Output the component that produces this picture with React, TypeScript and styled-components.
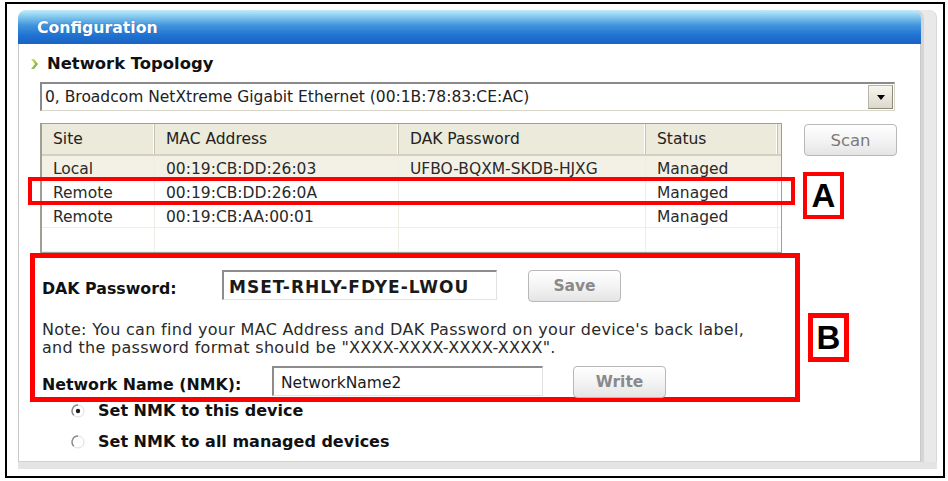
import styled, { createGlobalStyle } from 'styled-components';

const GlobalStyle = createGlobalStyle`
  body {
    margin: 0;
    background: #ffffff;
    font-family: "DejaVu Sans", Verdana, sans-serif;
    font-size: 15.5px;
    color: #222222;
  }
`;

const columns = [
  { key: 'site', title: 'Site', width: 113 },
  { key: 'mac', title: 'MAC Address', width: 244 },
  { key: 'dak', title: 'DAK Password', width: 247 },
  { key: 'status', title: 'Status', width: 132 },
];

const devices = [
  { site: 'Local', mac: '00:19:CB:DD:26:03', dak: 'UFBO-BQXM-SKDB-HJXG', status: 'Managed' },
  { site: 'Remote', mac: '00:19:CB:DD:26:0A', dak: '', status: 'Managed' },
  { site: 'Remote', mac: '00:19:CB:AA:00:01', dak: '', status: 'Managed' },
  { site: '', mac: '', dak: '', status: '' },
];

function TopologyIcon() {
  return (
    <svg width="8" height="12" viewBox="0 0 8 12">
      <defs>
        <linearGradient id="arrowFill" x1="0" y1="0" x2="1" y2="1">
          <stop offset="0" stopColor="#d6e85a" />
          <stop offset="1" stopColor="#5fa02a" />
        </linearGradient>
      </defs>
      <polygon points="0,1 3,1 7,6 3,11 0,11 4,6" fill="url(#arrowFill)" />
    </svg>
  );
}

function RadioMark({ checked }: { checked: boolean }) {
  return (
    <svg width="14" height="14" viewBox="0 0 14 14">
      <circle cx="7" cy="7" r="6" fill="#ffffff" stroke="#dcdcdc" strokeWidth="1" />
      <path d="M7 1 A6 6 0 0 0 2.8 11.2" fill="none" stroke="#8a8a8a" strokeWidth="1.4" />
      {checked && <circle cx="7" cy="7" r="2.2" fill="#1a1a1a" />}
    </svg>
  );
}

export default function App() {
  return (
    <>
      <GlobalStyle />
      <Frame>
        <Window>
          <TitleBar>Configuration</TitleBar>
          <Panel>
            <Heading>
              <TopologyIcon />
              <span>Network Topology</span>
            </Heading>

            <Combo>
              <ComboText>0, Broadcom NetXtreme Gigabit Ethernet (00:1B:78:83:CE:AC)</ComboText>
              <ComboButton>
                <Caret />
              </ComboButton>
            </Combo>

            <TableRow>
              <Table>
                <HeaderRow>
                  {columns.map((c) => (
                    <HeaderCell key={c.key} $width={c.width}>
                      {c.title}
                    </HeaderCell>
                  ))}
                </HeaderRow>
                {devices.map((d, i) => (
                  <BodyRow key={i} $shaded={i === 0}>
                    {columns.map((c) => (
                      <BodyCell key={c.key} $width={c.width}>
                        {d[c.key as keyof typeof d]}
                      </BodyCell>
                    ))}
                  </BodyRow>
                ))}
                <MarkBox />
                <MarkLabel $left={761} $top={48} $height={47} $border={4}>
                  A
                </MarkLabel>
              </Table>
              <Button $size={16.5} $bold={false} $tone="#7a7a7a">
                Scan
              </Button>
            </TableRow>

            <DakBox>
              <FieldRow>
                <FieldLabel $width={180}>DAK Password:</FieldLabel>
                <Input $width={275} $bold>
                  MSET-RHLY-FDYE-LWOU
                </Input>
                <Button $size={15.5} $bold $gap={31}>
                  Save
                </Button>
              </FieldRow>
              <Note>
                Note: You can find your MAC Address and DAK Password on your device's back label,
                <br />
                and the password format should be "XXXX-XXXX-XXXX-XXXX".
              </Note>
              <FieldRow $top={7}>
                <FieldLabel $width={230}>Network Name (NMK):</FieldLabel>
                <Input $width={271} $bold={false}>
                  NetworkName2
                </Input>
                <Button $size={15.5} $bold $gap={30}>
                  Write
                </Button>
              </FieldRow>
              <MarkLabel $left={773} $top={55} $height={49} $border={5}>
                B
              </MarkLabel>
            </DakBox>

            <RadioList>
              <RadioRow>
                <RadioMark checked />
                <span>Set NMK to this device</span>
              </RadioRow>
              <RadioRow>
                <RadioMark checked={false} />
                <span>Set NMK to all managed devices</span>
              </RadioRow>
            </RadioList>
          </Panel>
        </Window>
      </Frame>
    </>
  );
}

const Frame = styled.div`
  box-sizing: border-box;
  width: 940px;
  height: 476px;
  margin: 2px 0 0 5px;
  padding: 6px 0 0 11px;
  border: 2px solid #000000;
`;

const Window = styled.div`
  display: flex;
  flex-direction: column;
  width: 903px;
  border-radius: 8px 8px 0 0;
  box-shadow: 3px 0 0 #d6d6d6, 15px 0 0 #e9e9e9, 16px 0 0 #d8d8d8, 0 7px 0 #e4e4e4, 16px 7px 0 #e4e4e4;
`;

const TitleBar = styled.div`
  display: flex;
  align-items: center;
  height: 34px;
  padding-left: 19px;
  border-radius: 8px 8px 0 0;
  background: linear-gradient(#c4ecfa 0%, #8fd0f1 16%, #4294dd 45%, #1f72d2 75%, #1a62c2 100%);
  color: #ffffff;
  font-weight: bold;
  font-size: 15.7px;
  text-shadow: 0 0 1px rgba(0, 40, 120, 0.5);
`;

const Panel = styled.div`
  box-sizing: border-box;
  height: 418px;
  padding: 11px 0 0 11px;
  background: #ffffff;
  border-left: 1px solid #c9c9c9;
  border-right: 1px solid #c9c9c9;
  border-bottom: 1px solid #d0d0d0;
`;

const Heading = styled.div`
  display: flex;
  align-items: center;
  gap: 8px;
  height: 17px;
  padding-left: 1px;
  font-weight: bold;
  font-size: 16.4px;
  color: #111111;
`;

const Combo = styled.div`
  box-sizing: border-box;
  display: flex;
  align-items: center;
  width: 855px;
  height: 29px;
  margin: 10px 0 0 10px;
  padding: 0 1px 0 3px;
  border-top: 2px solid #8a8a8a;
  border-left: 2px solid #8a8a8a;
  border-right: 1px solid #d8d5c8;
  border-bottom: 1px solid #d8d5c8;
  background: #ffffff;
`;

const ComboText = styled.span`
  flex: 1;
  color: #222222;
`;

const ComboButton = styled.div`
  box-sizing: border-box;
  display: flex;
  align-items: center;
  justify-content: center;
  width: 25px;
  height: 24px;
  border: 1px solid #b9b6a6;
  border-right-color: #8c8a7e;
  border-bottom-color: #8c8a7e;
  background: linear-gradient(#f7f6ef, #dcd9cb);
`;

const Caret = styled.div`
  width: 0;
  height: 0;
  border-left: 4px solid transparent;
  border-right: 4px solid transparent;
  border-top: 5px solid #000000;
`;

const TableRow = styled.div`
  display: flex;
  align-items: flex-start;
  margin: 12px 0 0 10px;
`;

const Table = styled.div`
  position: relative;
  box-sizing: border-box;
  width: 742px;
  height: 130px;
  border: 1px solid #a19f92;
  border-left: 2px solid #a19f92;
  background: #ffffff;
`;

const HeaderRow = styled.div`
  display: flex;
  height: 30px;
  background: #ebeadb;
  border-bottom: 2px solid #d3d0c1;
`;

const HeaderCell = styled.div<{ $width: number }>`
  box-sizing: border-box;
  display: flex;
  align-items: center;
  width: ${(p) => p.$width}px;
  padding-left: 11px;
  border-right: 1px solid #c5c2b2;
  box-shadow: inset -1px 0 0 #ffffff;
  color: #222222;
`;

const BodyRow = styled.div<{ $shaded: boolean }>`
  display: flex;
  height: 23px;
  background: ${(p) => (p.$shaded ? '#f3f1e6' : '#ffffff')};
  border-bottom: 1px solid #efede6;
`;

const BodyCell = styled.div<{ $width: number }>`
  box-sizing: border-box;
  display: flex;
  align-items: center;
  width: ${(p) => p.$width}px;
  padding: 2px 0 0 11px;
  border-right: 1px solid #efede6;
  color: #2a2a2a;
`;

const MarkBox = styled.div`
  position: absolute;
  left: -14px;
  top: 53px;
  box-sizing: border-box;
  width: 767px;
  height: 28px;
  border: 4px solid #ff0000;
`;

const MarkLabel = styled.div<{ $left: number; $top: number; $height: number; $border: number }>`
  position: absolute;
  left: ${(p) => p.$left}px;
  top: ${(p) => p.$top}px;
  box-sizing: border-box;
  display: flex;
  align-items: center;
  justify-content: center;
  width: 41px;
  height: ${(p) => p.$height}px;
  border: ${(p) => p.$border}px solid #ff0000;
  background: #ffffff;
  font-family: "Liberation Sans", Arial, sans-serif;
  font-weight: bold;
  font-size: 33px;
  color: #000000;
`;

const Button = styled.div<{ $size: number; $bold: boolean; $gap?: number; $tone?: string }>`
  box-sizing: border-box;
  display: flex;
  align-items: center;
  justify-content: center;
  width: 93px;
  height: 32px;
  margin-left: ${(p) => p.$gap ?? 22}px;
  margin-top: 1px;
  border: 1px solid #b8b8b8;
  border-radius: 4px;
  background: linear-gradient(#ffffff, #f1f1f1 60%, #e4e4e4);
  font-size: ${(p) => p.$size}px;
  font-weight: ${(p) => (p.$bold ? 'bold' : 'normal')};
  color: ${(p) => p.$tone ?? '#8a8a8a'};
`;

const DakBox = styled.div`
  position: relative;
  box-sizing: border-box;
  width: 770px;
  height: 149px;
  padding: 10px 0 0 7px;
  border: 5px solid #ff0000;
`;

const FieldRow = styled.div<{ $top?: number }>`
  display: flex;
  align-items: center;
  height: 34px;
  margin-top: ${(p) => p.$top ?? 0}px;
`;

const FieldLabel = styled.div<{ $width: number }>`
  width: ${(p) => p.$width}px;
  padding-top: 6px;
  font-weight: bold;
  font-size: 15.8px;
  color: #111111;
`;

const Input = styled.div<{ $width: number; $bold: boolean }>`
  box-sizing: border-box;
  display: flex;
  align-items: center;
  width: ${(p) => p.$width}px;
  height: 30px;
  padding: 2px 0 0 ${(p) => (p.$bold ? 5 : 7)}px;
  border-top: 2px solid #8c8c8c;
  border-left: 2px solid #8c8c8c;
  border-right: 1px solid #e2e2e2;
  border-bottom: 1px solid #e2e2e2;
  background: #ffffff;
  font-weight: ${(p) => (p.$bold ? 'bold' : 'normal')};
  font-size: ${(p) => (p.$bold ? 17 : 15.5)}px;
  letter-spacing: ${(p) => (p.$bold ? 1 : 0)}px;
  color: #1a1a1a;
`;

const Note = styled.div`
  margin-top: 19px;
  line-height: 18px;
  font-size: 16px;
  letter-spacing: 0.3px;
  color: #2a2a2a;
`;

const RadioList = styled.div`
  display: flex;
  flex-direction: column;
  gap: 14px;
  padding-left: 41px;
`;

const RadioRow = styled.div`
  display: flex;
  align-items: center;
  gap: 13px;
  height: 17px;
  font-weight: bold;
  font-size: 16px;
  color: #111111;
`;
